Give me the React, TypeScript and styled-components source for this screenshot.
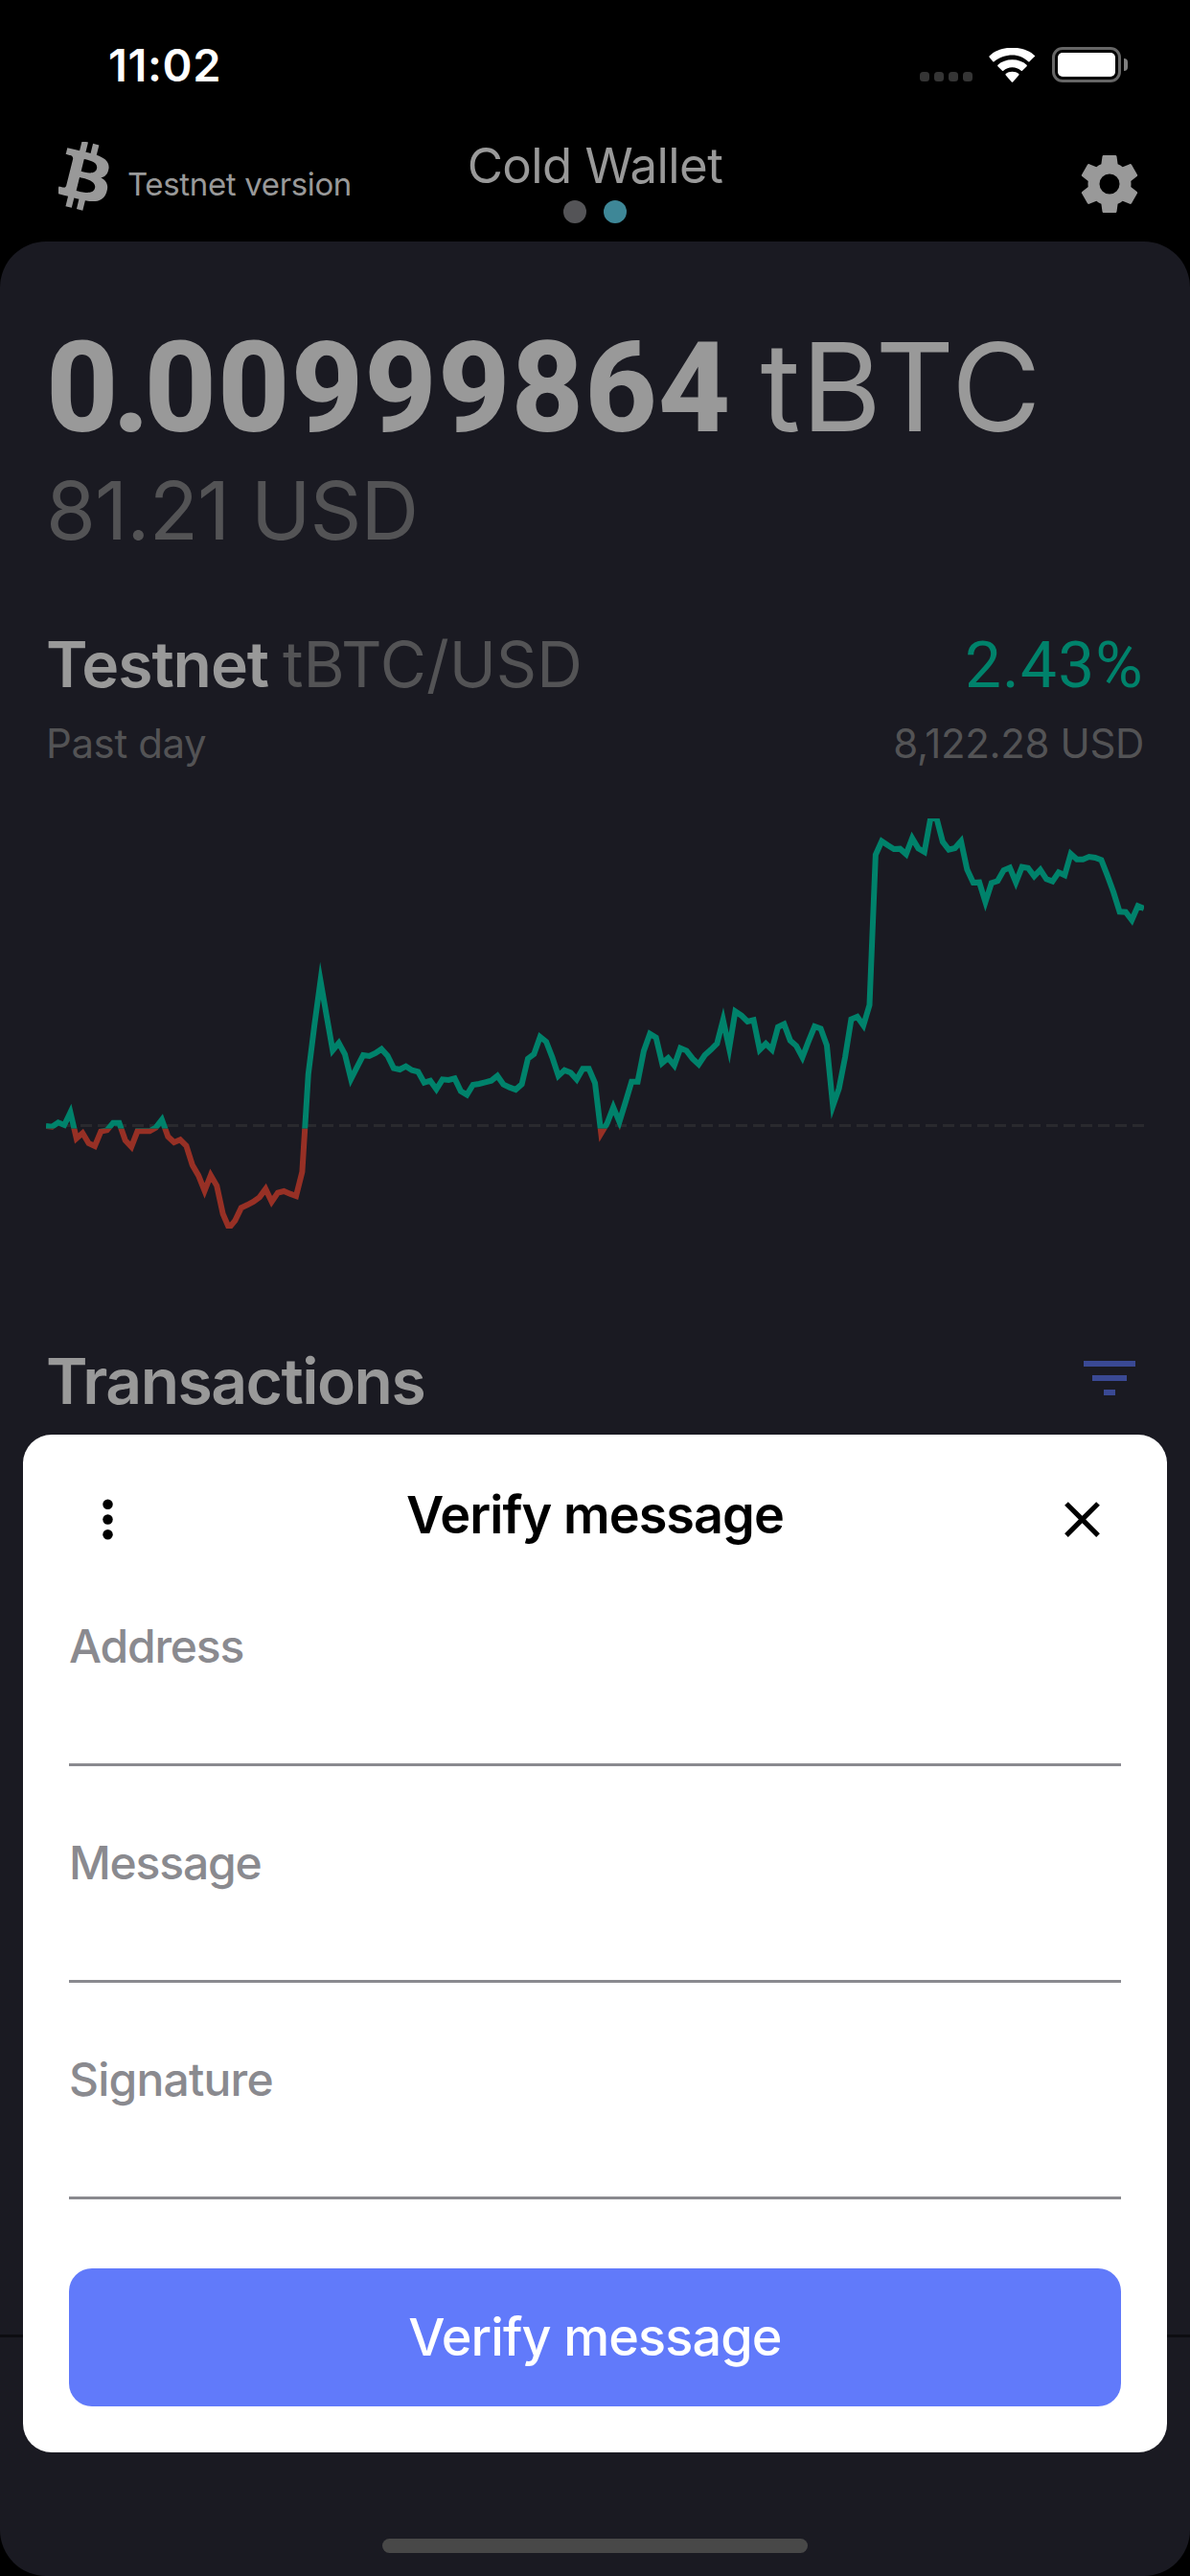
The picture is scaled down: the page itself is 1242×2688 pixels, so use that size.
import React from "react";
import styled, { createGlobalStyle } from "styled-components";

const GlobalStyle = createGlobalStyle`
  * { box-sizing: border-box; }
  body { margin: 0; background: #000; }
  h1, h2, p { margin: 0; font-weight: inherit; font-size: inherit; }
`;

const Screen = styled.div`
  position: relative;
  display: flex;
  flex-direction: column;
  width: 1242px;
  height: 2688px;
  overflow: hidden;
  background: #000;
  font-family: Inter, "Liberation Sans", sans-serif;
  color: #999;
`;

interface TextProps {
  $size: number;
  $line?: number;
  $weight?: number;
  $color?: string;
  $track?: number;
}

const Text = styled.span<TextProps>`
  display: block;
  white-space: pre;
  font-size: ${(p) => p.$size}px;
  line-height: ${(p) => (p.$line ? `${p.$line}px` : "inherit")};
  font-weight: ${(p) => p.$weight ?? 400};
  color: ${(p) => p.$color ?? "inherit"};
  letter-spacing: ${(p) => p.$track ?? 0}px;
`;

const Figures = styled(Text)`
  font-family: Roboto, "Liberation Sans", sans-serif;
`;

const LeadingFigures = styled.span`
  letter-spacing: -6px;
`;

const Balance = styled.div`
  display: flex;
  align-items: baseline;
  gap: 30px;
  height: 156px;
`;

const Pair = styled.div`
  display: flex;
  align-items: baseline;
  gap: 15px;
`;

const Change = styled(Figures)`
  padding-top: 1px;
`;

const StatusBar = styled.div`
  display: flex;
  align-items: center;
  justify-content: space-between;
  flex: none;
  height: 135px;
  padding: 0 65px 0 113px;
`;

const StatusIcons = styled.div`
  display: flex;
  align-items: center;
`;

const SignalDots = styled.div`
  display: flex;
  align-self: flex-end;
  gap: 5px;
  margin: 0 17px 1px 0;
`;

const SignalDot = styled.i`
  width: 10px;
  height: 10px;
  border-radius: 3.5px;
  background: #353535;
`;

const BatteryBody = styled.div`
  width: 72px;
  height: 37px;
  margin-left: 17px;
  padding: 3px;
  border: 3px solid #666;
  border-radius: 11px;
`;

const BatteryLevel = styled.div`
  height: 25px;
  border-radius: 5px;
  background: #fff;
`;

const BatteryCap = styled.div`
  width: 4px;
  height: 13px;
  margin-left: 3px;
  border-radius: 0 5px 5px 0;
  background: #808080;
`;

const Header = styled.header`
  display: grid;
  grid-template-columns: 1fr auto 1fr;
  flex: none;
  height: 117px;
  padding: 0 48px;
`;

const Network = styled.div`
  display: flex;
  align-items: flex-start;
  gap: 19px;
  padding: 13px 0 0 13px;
`;

const NetworkLabel = styled(Text)`
  padding-top: 24px;
`;

const TitleGroup = styled.div`
  display: flex;
  flex-direction: column;
  align-items: center;
  gap: 5px;
  padding-top: 7px;
`;

const Pager = styled.div`
  display: flex;
  gap: 18px;
`;

const PageDot = styled.i<{ $active?: boolean }>`
  width: 24px;
  height: 24px;
  border-radius: 50%;
  background: ${(p) => (p.$active ? "#3e8797" : "#545457")};
`;

const SettingsButton = styled.button`
  justify-self: end;
  width: 72px;
  height: 72px;
  margin-top: 21px;
  padding: 0;
  border: 0;
  background: none;
  color: inherit;
`;

const Panel = styled.main`
  flex: 1;
  padding: 74px 48px 0;
  border-radius: 48px;
  background: #1a1a22;
`;

const Row = styled.div<{ $top?: number }>`
  display: flex;
  justify-content: space-between;
  margin-top: ${(p) => p.$top ?? 0}px;
`;

const ChartSvg = styled.svg`
  display: block;
  width: 1146px;
  height: 428px;
  margin-top: 52px;
`;

const FilterButton = styled.button`
  width: 72px;
  height: 72px;
  padding: 0;
  border: 0;
  background: none;
  color: #3a4994;
`;

const TabDivider = styled.hr`
  height: 3px;
  margin: 955px -48px 0;
  border: 0;
  background: #0d0d11;
`;

const ModalLayer = styled.div`
  position: absolute;
  inset: 0;
  display: flex;
  flex-direction: column;
  justify-content: flex-end;
  align-items: center;
`;

const Modal = styled.section`
  width: 1194px;
  height: 1062px;
  padding: 0 48px 48px;
  border-radius: 30px;
  background: #fff;
  color: #000;
`;

const ModalHeader = styled.div`
  display: flex;
  align-items: flex-start;
  justify-content: space-between;
  height: 156px;
  padding: 51px 9px 0;
`;

const IconButton = styled.button`
  width: 63px;
  height: 63px;
  margin-top: 6px;
  padding: 0;
  border: 0;
  background: none;
  color: #000;
`;

const Field = styled.label`
  display: block;
  height: 226px;
  padding-top: 32px;
`;

const Underline = styled.div`
  height: 3px;
  margin-top: 89px;
  background: #8a8a8f;
`;

const SubmitButton = styled.button`
  display: flex;
  align-items: center;
  justify-content: center;
  width: 100%;
  height: 144px;
  margin-top: 36px;
  padding: 0;
  border: 0;
  border-radius: 24px;
  background: #617afa;
  font-family: inherit;
`;

const HomeIndicator = styled.div`
  width: 444px;
  height: 15px;
  margin: 90px 0 24px;
  border-radius: 8px;
  background: #484848;
`;

/* Price samples over the past day, in chart units measured downwards. */
const samples = [
  1065, 1067, 1054, 1062, 1022, 1104, 1087, 1119, 1128, 1082, 1078, 1055, 1055,
  1110, 1130, 1081, 1081, 1081, 1070, 1045, 1098, 1116, 1108, 1127, 1187, 1220,
  1268, 1219, 1252, 1340, 1384, 1361, 1321, 1312, 1302, 1288, 1262, 1302, 1274,
  1269, 1277, 1284, 1208, 903, 750, 610, 720, 828, 805, 840, 918, 880, 843, 846,
  837, 824, 845, 884, 888, 878, 890, 895, 929, 923, 950, 919, 921, 916, 956, 967,
  936, 933, 928, 923, 908, 935, 944, 951, 934, 854, 840, 786, 801, 850, 908, 890,
  898, 919, 886, 886, 930, 1088, 1056, 1006, 1052, 990, 926, 926, 830, 776, 788,
  868, 852, 875, 821, 829, 854, 872, 843, 826, 807, 733, 822, 706, 719, 738, 733,
  826, 807, 826, 755, 746, 797, 814, 850, 800, 753, 760, 812, 1002, 947, 850,
  731, 723, 750, 686, 216, 173, 186, 198, 197, 214, 164, 196, 207, 102, 102, 175,
  200, 195, 173, 262, 303, 302, 364, 304, 298, 264, 256, 302, 254, 257, 283, 263,
  292, 299, 271, 280, 213, 230, 230, 222, 225, 232, 281, 333, 394, 395, 420, 376,
  384,
];

const points = samples
  .map((y, i) => `${((i * 3438) / (samples.length - 1)).toFixed(1)},${y}`)
  .join(" ");

function PriceChart() {
  return (
    <ChartSvg viewBox="0 102 3438 1284">
      <defs>
        <clipPath id="gain">
          <rect x="0" y="102" width="3438" height="971" />
        </clipPath>
        <clipPath id="loss">
          <rect x="0" y="1073" width="3438" height="313" />
        </clipPath>
      </defs>
      <line
        x1="0"
        x2="3438"
        y1="1063.5"
        y2="1063.5"
        stroke="#29292e"
        strokeWidth="9"
        strokeDasharray="36 18"
      />
      <g fill="none" strokeWidth="18" strokeMiterlimit="10">
        <polyline points={points} stroke="#00826b" clipPath="url(#gain)" />
        <polyline points={points} stroke="#973025" clipPath="url(#loss)" />
      </g>
    </ChartSvg>
  );
}

function BitcoinIcon() {
  return (
    <svg width="53" height="72" viewBox="6.35 4.4 11.05 15.05" preserveAspectRatio="none" fill="#999">
      <path d="M17.288 10.291c.24-1.59-.974-2.45-2.64-3.03l.54-2.153-1.315-.33-.525 2.107c-.345-.087-.705-.167-1.064-.25l.526-2.127-1.32-.33-.54 2.165c-.285-.067-.565-.132-.84-.2l-1.815-.45-.35 1.407s.975.225.955.236c.535.136.63.486.615.766l-1.477 5.92c-.075.166-.24.406-.614.314.015.02-.96-.24-.96-.24l-.66 1.51 1.71.426.93.242-.54 2.19 1.32.327.54-2.17c.36.1.705.19 1.05.273l-.51 2.154 1.32.33.545-2.19c2.24.427 3.93.257 4.64-1.774.57-1.637-.03-2.58-1.217-3.196.854-.193 1.5-.76 1.68-1.93h.01zm-3.01 4.22c-.404 1.64-3.157.75-4.05.53l.72-2.9c.896.23 3.757.67 3.33 2.37zm.41-4.24c-.37 1.49-2.662.735-3.405.55l.654-2.64c.744.18 3.137.524 2.75 2.084v.006z" />
    </svg>
  );
}

function WifiIcon() {
  return (
    <svg width="49" height="36" viewBox="0 0 49 36" fill="#fff">
      <path d="M24.5 7.6c6.4 0 12.3 2.500 16.700 6.700.400.400.900.400 1.300 0l3.200-3.200 2.700-2.700C42 2.200 33.600-.3 24.500-.3S7 2.200.6 8.400c-.4.400-.4 1 0 1.400l3.700 4.500c.4.400.9.400 1.300 0C10.300 10.100 18.100 7.600 24.500 7.600z" />
      <path d="M24.500 20.300c3.500 0 6.700 1.300 9.200 3.500.4.300.9.300 1.300 0l4.600-4.600c.4-.4.400-1 0-1.400-4-3.600-9.300-5.500-15.100-5.500s-11.100 1.900-15.100 5.500c-.4.400-.4 1 0 1.400l4.600 4.600c.4.300.9.300 1.300 0 2.500-2.200 5.700-3.500 9.200-3.500z" />
      <path d="M31.300 28.400c.4-.4.400-1 0-1.300-1.800-1.500-4.200-2.300-6.800-2.300s-5 .8-6.800 2.300c-.4.300-.4.900 0 1.300l6.100 7.100c.4.400 1 .4 1.400 0z" />
    </svg>
  );
}

function CogIcon() {
  return (
    <svg width="72" height="72" viewBox="0 0 24 24" fill="currentColor">
      <path d="M12 15.500A3.500 3.500 0 0 1 8.500 12 3.500 3.500 0 0 1 12 8.500a3.500 3.500 0 0 1 3.500 3.500 3.500 3.500 0 0 1-3.500 3.500m7.430-2.530c.04-.32.07-.64.07-.97s-.03-.66-.07-1l2.110-1.630c.19-.15.240-.42.120-.64l-2-3.460c-.12-.22-.39-.31-.61-.22l-2.490 1c-.52-.39-1.060-.73-1.690-.98l-.37-2.650A.506.506 0 0 0 14 2h-4c-.25 0-.46.180-.5.420l-.37 2.650c-.63.250-1.170.590-1.690.980l-2.490-1c-.22-.09-.49 0-.61.220l-2 3.460c-.13.220-.07.490.120.640L4.570 11c-.04.340-.07.670-.07 1s.03.650.070.970l-2.110 1.660c-.19.150-.25.420-.12.640l2 3.460c.12.220.390.300.610.220l2.490-1.010c.52.400 1.060.740 1.690.990l.370 2.650c.04.240.250.420.500.420h4c.25 0 .46-.18.500-.42l.37-2.650c.63-.26 1.170-.59 1.690-.99l2.490 1.010c.22.080.490 0 .610-.22l2-3.460c.12-.22.070-.49-.12-.64z" />
    </svg>
  );
}

function FilterIcon() {
  return (
    <svg width="72" height="72" viewBox="0 0 24 24" fill="currentColor">
      <path d="M10 18h4v-2h-4v2zM3 6v2h18V6H3zm3 7h12v-2H6v2z" />
    </svg>
  );
}

function MoreIcon() {
  return (
    <svg width="63" height="63" viewBox="0 0 24 24" fill="currentColor">
      <circle cx="12" cy="6" r="2" />
      <circle cx="12" cy="12" r="2" />
      <circle cx="12" cy="18" r="2" />
    </svg>
  );
}

function CloseIcon() {
  return (
    <svg width="63" height="63" viewBox="0 0 24 24" fill="currentColor">
      <path d="M19 6.410 17.590 5 12 10.590 6.410 5 5 6.410 10.590 12 5 17.590 6.410 19 12 13.410 17.590 19 19 17.590 13.410 12z" />
    </svg>
  );
}

const fields = [
  { name: "Address", track: -1.2 },
  { name: "Message", track: -1.2 },
  { name: "Signature", track: -0.8 },
];

export default function App() {
  return (
    <Screen>
      <GlobalStyle />
      <StatusBar>
        <Text $size={47} $line={56} $weight={600} $color="#fff" $track={0.6}>11:02</Text>
        <StatusIcons>
          <SignalDots>
            <SignalDot />
            <SignalDot />
            <SignalDot />
            <SignalDot />
          </SignalDots>
          <WifiIcon />
          <BatteryBody>
            <BatteryLevel />
          </BatteryBody>
          <BatteryCap />
        </StatusIcons>
      </StatusBar>

      <Header>
        <Network>
          <BitcoinIcon />
          <NetworkLabel $size={33} $line={40} $track={-0.35}>Testnet version</NetworkLabel>
        </Network>
        <TitleGroup>
          <Text as="h1" $size={51} $line={62} $track={-0.6}>Cold Wallet</Text>
          <Pager>
            <PageDot />
            <PageDot $active />
          </Pager>
        </TitleGroup>
        <SettingsButton aria-label="Settings">
          <CogIcon />
        </SettingsButton>
      </Header>

      <Panel>
        <Balance>
          <Figures $size={131} $line={156} $weight={800} $track={1.1}>
            <LeadingFigures>0.</LeadingFigures>
            00999864
          </Figures>
          <Text $size={128} $line={156} $track={0.8}>tBTC</Text>
        </Balance>
        <Text $size={84} $line={102} $color="#535355" $track={-0.9}>81.21 USD</Text>
        <Row $top={69}>
          <Pair>
            <Text $size={66} $line={80} $weight={600} $track={-1.1}>Testnet</Text>
            <Text $size={66} $line={80} $color="#535355" $track={0}>tBTC/USD</Text>
          </Pair>
          <Change $size={67.5} $line={79} $color="#00826b" $track={1.2}>2.43%</Change>
        </Row>
        <Row $top={17}>
          <Text $size={42} $line={52} $color="#535355" $track={-0.4}>Past day</Text>
          <Text $size={42} $line={52} $color="#535355" $track={-0.35}>8,122.28 USD</Text>
        </Row>
        <PriceChart />
        <Row $top={120}>
          <Text as="h2" $size={66} $line={79} $weight={600} $track={-1.55}>Transactions</Text>
          <FilterButton aria-label="Filter">
            <FilterIcon />
          </FilterButton>
        </Row>
        <TabDivider />
      </Panel>

      <ModalLayer>
        <Modal>
          <ModalHeader>
            <IconButton aria-label="More">
              <MoreIcon />
            </IconButton>
            <Text as="h2" $size={54} $line={66} $weight={600} $track={-0.95}>Verify message</Text>
            <IconButton aria-label="Close">
              <CloseIcon />
            </IconButton>
          </ModalHeader>
          {fields.map(({ name, track }) => (
            <Field key={name}>
              <Text $size={48} $line={66} $weight={500} $color="#8a8a8f" $track={track}>{name}</Text>
              <Underline />
            </Field>
          ))}
          <SubmitButton>
            <Text $size={54} $line={66} $weight={500} $color="#fff" $track={-0.9}>Verify message</Text>
          </SubmitButton>
        </Modal>
        <HomeIndicator />
      </ModalLayer>
    </Screen>
  );
}
